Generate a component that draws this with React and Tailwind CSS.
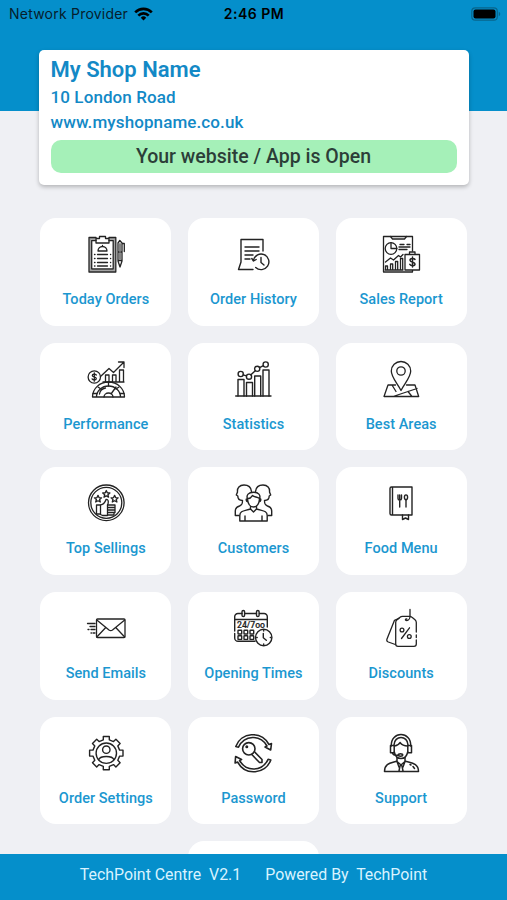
import React from "react";

const Icon = ({ children, width = 1.4 }) => (
  <svg
    viewBox="0 0 40 40"
    className="w-10 h-10"
    fill="none"
    stroke="#232323"
    strokeWidth={width}
    strokeLinecap="round"
    strokeLinejoin="round"
  >
    {children}
  </svg>
);

const TodayOrdersIcon = () => (
  <Icon width={1.3}>
    <path d="M10 4.500H4.200v32.300h24.300V4.500H23" stroke="#a3a3a3" strokeWidth="2" />
    <path d="M10 3.500H3v34.500h26.800V3.500H23" />
    <path d="M10 6.500H5.700v28.500h21.500V6.500H23" />
    <path d="M10 9V4.500h3.500V2.500h6v2H23V9z" />
    <path d="M12 17a4.500 4.500 0 0 1 9 0zM16.500 12.500v-1" />
    <path d="M11.500 20.500h10M11.500 24.500h10M11.500 28.500h10M11.500 32h10" />
    <path d="M8.500 20.500h.5M8.500 24.500h.5M8.500 28.500h.5M8.500 32h.5M24.500 20.500h.2M24.500 24.500h.2M24.500 28.500h.2M24.500 32h.2" />
    <path d="M32 9l1.800-2.500L36 9v18l-2 6-2-6zM32 18h4M32 26.500h4M36 9.500h2.300v8" />
    <path d="M34 10v7M34 19.500v5.500" stroke="#777" strokeWidth="1.800" />
  </Icon>
);

const OrderHistoryIcon = () => (
  <Icon>
    <path d="M30 17V5.500H8V28L5.500 35.500H20" />
    <path d="M12 13h14M12 17h14M12 21h8M12 25h5" />
    <path d="M20.500 26a7.800 7.800 0 1 1 2.200 7.500M18.800 24.500l1.700 2.500 2.700-1.500" />
    <path d="M28 23.500v5l3 2.500" />
  </Icon>
);

const SalesReportIcon = () => (
  <Icon width={1.3}>
    <path d="M31.500 17V2.500H2.500v35.500h29v-1.500" />
    <path d="M9.500 2.500L11.500 5h12l2-2.500" />
    <circle cx="10" cy="14.500" r="5.800" />
    <path d="M10 8.700v5.800h5.800M19 10.500h4M26 10.500h3M18 13h11M18 15.500h8" />
    <path d="M4.500 28l5-4 3 2 5-4.500 2 1.500 2.500-2.500" />
    <path d="M4.500 36v-4h2v4M9.500 36v-6h2.200v6M14.500 36v-8.500h2.200V36M19.500 36V24.500h2.200V36M4 36h18" />
    <path d="M24 20.500h14.500V36H24zM28.500 20.500V18h5.500v2.500" fill="#fff" />
    <path d="M34 25.500c-1-1.500-5-1.500-5 .7 0 2.500 5 1.500 5 3.800 0 2.200-4 2.200-5.200.3M31.500 23v10" strokeWidth="1.500" />
  </Icon>
);

const PerformanceIcon = () => (
  <Icon width={1.3}>
    <circle cx="8.300" cy="18" r="6.200" />
    <path d="M10.300 16c-1-1.300-4-1.200-4 .4 0 1.900 4 1.200 4 3.200 0 1.800-3.300 1.800-4.200.3M8.300 13.800v8.400" />
    <path d="M14.500 17.500L23 9.500l4.500 4L38 3M32.500 3H38v5.500" />
    <path d="M19.500 23v-7H23v7M26.500 23v-7H30v7M33.500 23V11h4v12M17 23h21" />
    <path d="M6.500 38a16 15 0 0 1 32 0zM10.500 38a12 11 0 0 1 24 0" />
    <path d="M18 38a4.500 4 0 0 1 9 0M25 35l5-7M13.500 35c.5-3 3-5.500 6-6M22.500 23v4M33 28l-3 2M12 28l3 2M7 34.500h4M38 34.500h-4" />
  </Icon>
);

const StatisticsIcon = () => (
  <Icon>
    <path d="M2.700 37h35.300" />
    <path d="M5 37V20.500h6V37M13.500 37V23.500h6V37M21.700 37V17h6v20M30 37V11h6v26" />
    <circle cx="7.700" cy="15" r="2.600" />
    <circle cx="16" cy="17.700" r="2.600" />
    <circle cx="24.200" cy="9.800" r="2.600" />
    <circle cx="32.700" cy="5.500" r="2.600" />
    <path d="M10.200 15.900l3.300 1M17.900 15.800l4.400-4.100M26.500 8.600l3.900-2" />
  </Icon>
);

const BestAreasIcon = () => (
  <Icon width={1.3}>
    <path d="M20 31.500C17 25 10.300 18.500 10.300 12a9.700 9.500 0 0 1 19.400 0C29.700 18.500 23 25 20 31.500z" />
    <circle cx="20" cy="12" r="4.200" />
    <path d="M14.500 26H7L3 37.500h34.700L34 26h-8.500M11 26l4 6.500M12 37.500L36 29.500M27 32.500l4 5" />
  </Icon>
);

const STAR = "M0-3.500l1 2.300 2.600.2-2 1.700.7 2.500L0 1.900l-2.300 1.300.7-2.500-2-1.700 2.600-.2z";

const TopSellingsIcon = () => (
  <Icon width={1.3}>
    <circle cx="20.300" cy="19.800" r="17.800" />
    <circle cx="20.300" cy="19.800" r="15.500" />
    <path d={STAR} transform="translate(12 15.800)" />
    <path d={STAR} transform="translate(20.300 11)" />
    <path d={STAR} transform="translate(28.600 15.800)" />
    <path d="M10.500 22h3c3.500 0 5.500-2 6.500-5.500 3-.5 2.500 3.500 1.500 5.500M10.500 22v9h3l3 1.500h5M14.500 22.500V31" />
    <path d="M21.500 22H29v2.500h-7.500zM21.500 24.500H29V27h-7.500zM21.500 27H29v2.500h-7.500zM21.500 29.500H28V32h-6.500z" />
  </Icon>
);

const CustomersIcon = () => (
  <Icon>
    <path d="M18.500 8.500c-.5-4.500-3.500-6.500-7.500-6.500-4.500 0-7 3-6.500 7L3.300 12l1.500 1c0 4 2 4.500 4.700 4.500 0 3.500-.5 4.500-3 5.500C3.500 24 2.300 25 2.300 28v4.500H6" />
    <path d="M22.500 8.500C23 4 26 2 30 2c4.500 0 7 3 6.500 7l1.200 3-1.500 1c0 4-2 4.500-4.700 4.500 0 3.500.5 4.500 3 5.500 3 1 4.200 2 4.200 5v4.500H35" />
    <path d="M14.500 16c-1.500-4 1-6.800 6-6.800s7.500 2.800 6 6.800c-.5 5-2.500 8-6 8s-5.500-3-6-8zM14.500 15.500c3 .5 4-1.500 5-3 2 2 4.500 1 7 3M14.500 15.500c-2 0-1.500 3 .3 3.300M26.500 15.500c2 0 1.500 3-.3 3.300" />
    <path d="M17.500 23.500V26l3 3 3-3v-2.500M17.500 26c-6 2-10.700 1.500-10.700 6.500V38h27.400v-5.500c0-5-4.700-4.500-10.700-6.500M12 33v5M29 33v5" />
  </Icon>
);

const FoodMenuIcon = () => (
  <Icon>
    <path d="M9 5.500C9 4.500 9.500 4 10.500 4H31v28H10.500C9.500 32 9 31.500 9 30.500zM11.500 4v28" />
    <path d="M21.500 32v4.500l3-1.500 3 1.500V32" />
    <path d="M17 12v3.500c0 1 .5 1.500 1.700 1.500s1.800-.5 1.800-1.500V12M18.700 12v12" />
    <ellipse cx="25" cy="14.300" rx="1.600" ry="2.400" />
    <path d="M25 17v7" />
  </Icon>
);

const SendEmailsIcon = () => (
  <Icon width={1.3}>
    <rect x="10.500" y="11" width="28.500" height="18.500" rx="1" />
    <path d="M10.800 12l12.200 10c1.200.9 2.300.9 3.500 0L38.700 12M10.800 29l8.500-9M38.700 29l-8.500-9" />
    <path d="M1.500 15.500H9M4 18.500h5M2 21.500h1M5 21.500h4M5 25h.5M7 25h2" />
  </Icon>
);

const OpeningTimesIcon = () => (
  <Icon>
    <path d="M9 5.500H5A3.300 3.300 0 0 0 1.700 9v14M1.700 25.500V30A3.300 3.300 0 0 0 5 33.300h17M12 5.500h11.500M26.500 5.500H31A3.300 3.300 0 0 1 34.300 9v10M2 11.500h32" />
    <rect x="9" y="2.500" width="2.600" height="6" rx="1.300" />
    <rect x="23.500" y="2.500" width="2.600" height="6" rx="1.300" />
    <text
      x="4"
      y="20"
      textLength="28"
      lengthAdjust="spacingAndGlyphs"
      fontSize="8.300"
      fontWeight="500"
      fontFamily="Roboto, sans-serif"
      fill="#232323"
      strokeWidth="0.200"
    >
      24/7oo
    </text>
    {[5, 11, 17].map((x) => (
      <g key={x}>
        <rect x={x} y="22.300" width="3.700" height="3.700" rx="0.500" />
        <rect x={x} y="27.700" width="3.700" height="3.700" rx="0.500" />
      </g>
    ))}
    <circle cx="30.700" cy="29.500" r="8.200" fill="#fff" />
    <path d="M30.300 25.500v4.300l3 2.400M30.700 22.500v.5M30.700 36v.5M23.700 29.500h.5M37.300 29.500h.5" />
  </Icon>
);

const DiscountsIcon = () => (
  <Icon width={1.3}>
    <path d="M35.300 24V14.500c0-1.200-.5-2-1.300-2.700l-3-2.500c-.8-.7-1.500-1-2.500-1h-7c-1 0-1.800.3-2.500 1l-3 2.500c-.8.700-1.300 1.500-1.300 2.700V36c0 1.500.8 2.300 2.300 2.300h16c1.500 0 2.300-.8 2.300-2.300v-4M35.300 27v2.500" />
    <path d="M18 10.300l-4.500 2L6 31c-.6 1.500 0 2.500 1.300 3l7 2.500" />
    <path d="M29 1.500V8c0 2.500-1.500 4.500-3.200 4.500-2 0-1.700-1.700 0-1.700" />
    <circle cx="21" cy="22" r="1.900" />
    <circle cx="28.300" cy="28.500" r="1.900" />
    <path d="M28.500 19.800l-8 10.700" />
  </Icon>
);

const OrderSettingsIcon = () => (
  <Icon>
    <path d="M17.300 3.500h6v3.300l4.200 1.800 2.400-2.300 4.200 4.200-2.300 2.400 1.800 4.200h3.400v6h-3.400l-1.800 4.200 2.300 2.400-4.200 4.200-2.400-2.300-4.200 1.800v3.300h-6v-3.300l-4.200-1.800-2.400 2.300-4.200-4.200 2.300-2.400L7 23.100H3.600v-6H7l1.800-4.200-2.300-2.400 4.200-4.200 2.400 2.300 4.200-1.800z" />
    <circle cx="20.300" cy="20.200" r="10.200" />
    <circle cx="20.300" cy="16.700" r="3.700" />
    <path d="M12.800 26.500c1.500-4 13.500-4 15 0" />
  </Icon>
);

const PasswordIcon = () => (
  <Icon width={1.6}>
    <path d="M2.800 13.500C8-.5 28-3 36 11.500l2.500-1-.8 6.500-5.700-3 2-1C27.500 1.500 11.500 1.500 5.500 14.200z" />
    <path d="M37.800 27c-5.200 14-25.200 16.500-33.200 2l-2.500 1 .5-6.500 6 3-2 1c6.500 11.500 22.500 11.500 28.500-1.200z" />
    <circle cx="15.800" cy="15.800" r="6.200" />
    <circle cx="13.800" cy="13.800" r=".7" />
    <path d="M21.500 18.800l7.500 7.700v3h-2.500l-7.700-8" />
  </Icon>
);

const SupportIcon = () => (
  <Icon width={1.5}>
    <path d="M10.300 13C9.500-2.200 30.500-2.200 29.700 13M13 12C13.200 2 26.800 2 27 12" />
    <path d="M9.500 12.500h3.700v7.300H9.500zM26.800 12.500h3.700v7.300h-3.700z" />
    <path d="M13.500 13c3-.5 4.500-1.500 5.500-3.500 2 2.500 4.500 3.500 7.500 3.500M13.300 19c.8 4 3.500 6.500 6.700 6.500s5.900-2.500 6.700-6.500M11.500 20c.5 2 3 2.500 6 2.300" />
    <ellipse cx="19.500" cy="22" rx="2.200" ry="1.200" />
    <path d="M16 25v3.500L20 32l4-3.500V25M16 28c-6 2-12.500 2-12.500 10.500h34C37.500 30 30 30 24 28M16 28.500l2 5.500 2-2 2 2 2-5.500M19 33l-1 5M21 33l1 5M29 31.500l1 .5M32 33.500l1.500 2" />
  </Icon>
);

const menuItems = [
  { label: "Today Orders", Icon: TodayOrdersIcon },
  { label: "Order History", Icon: OrderHistoryIcon },
  { label: "Sales Report", Icon: SalesReportIcon },
  { label: "Performance", Icon: PerformanceIcon },
  { label: "Statistics", Icon: StatisticsIcon },
  { label: "Best Areas", Icon: BestAreasIcon },
  { label: "Top Sellings", Icon: TopSellingsIcon },
  { label: "Customers", Icon: CustomersIcon },
  { label: "Food Menu", Icon: FoodMenuIcon },
  { label: "Send Emails", Icon: SendEmailsIcon },
  { label: "Opening Times", Icon: OpeningTimesIcon },
  { label: "Discounts", Icon: DiscountsIcon },
  { label: "Order Settings", Icon: OrderSettingsIcon },
  { label: "Password", Icon: PasswordIcon },
  { label: "Support", Icon: SupportIcon },
];

const StatusBar = () => (
  <div className="grid grid-cols-3 items-center h-7 pl-[9px] pr-[6px] font-['Inter',sans-serif] text-sm text-[#06202c]">
    <div className="flex items-center gap-1.5 whitespace-nowrap">
      <span className="tracking-[0.22px]">Network Provider</span>
      <svg viewBox="0 0 19 14" className="w-[19px] h-[14px] shrink-0" fill="none" stroke="#000" strokeWidth="2.6">
        <path d="M1.200 5.300a11.700 11.700 0 0 1 16.600 0M4.300 8.600a7.300 7.300 0 0 1 10.400 0" />
        <path d="M9.500 13.500L6.800 10.700a3.800 3.800 0 0 1 5.400 0z" fill="#000" stroke="none" />
      </svg>
    </div>
    <span className="text-center font-semibold tracking-[0.5px] text-black -ml-0.5">2:46 PM</span>
    <svg viewBox="0 0 30 14" className="w-[30px] h-[14px] justify-self-end">
      <rect x="0.800" y="0.800" width="25.500" height="12.400" rx="3.500" fill="none" stroke="#08658c" strokeWidth="1.200" />
      <rect x="2.500" y="2.500" width="22" height="9" rx="2" fill="#000" />
      <path d="M27.800 4.800v4.400c2-.8 2-3.600 0-4.400z" fill="#08658c" />
    </svg>
  </div>
);

const ShopCard = () => (
  <div className="mx-[38.500px] mt-[22px] h-[135px] rounded-[5px] bg-white px-3 pt-1.5 shadow-[0_2px_4px_rgba(0,0,0,0.25)] text-[#1389c6]">
    <h1 className="text-[22px] leading-7 font-semibold">My Shop Name</h1>
    <p className="text-[17px] leading-[26px] font-medium tracking-[0.1px]">10 London Road</p>
    <p className="text-[17px] leading-[25px] font-medium tracking-[0.1px]">www.myshopname.co.uk</p>
    <div className="mt-[5px] h-[33px] rounded-[10px] bg-[#a5f0b8] text-center text-[19.500px] leading-[33px] font-medium text-[#2c3e38]">
      Your website / App is Open
    </div>
  </div>
);

const MenuCard = ({ item }) => (
  <div className="flex flex-col items-center h-[107.500px] rounded-2xl bg-white pt-4">
    <item.Icon />
    <span className="mt-4 text-[14.500px] leading-5 font-medium text-[#1b97d0] tracking-[0.05px]">
      {item.label}
    </span>
  </div>
);

const App = () => {
  return (
    <div className="flex flex-col h-[900px] w-[507px] overflow-hidden bg-[#eff0f4] font-['Roboto',sans-serif]">
      <header className="h-[110.500px] shrink-0 bg-[#058fcb]">
        <StatusBar />
        <ShopCard />
      </header>
      <main className="flex-1 min-h-0 overflow-hidden pt-[107.500px] pl-[40.300px] pr-[40.300px]">
        <div className="grid grid-cols-3 gap-x-[16.500px] gap-y-[17.200px]">
          {menuItems.map((item) => (
            <MenuCard key={item.label} item={item} />
          ))}
          <div className="col-start-2 h-[107.500px] rounded-2xl bg-white" />
        </div>
      </main>
      <footer className="flex justify-center gap-6 h-[46px] shrink-0 bg-[#058fcb] pt-[9px] text-[15.900px] leading-[23px] text-[#d9f3ff]">
        <span className="whitespace-pre">TechPoint Centre  V2.1</span>
        <span className="whitespace-pre">Powered By  TechPoint</span>
      </footer>
    </div>
  );
};

export default App;
